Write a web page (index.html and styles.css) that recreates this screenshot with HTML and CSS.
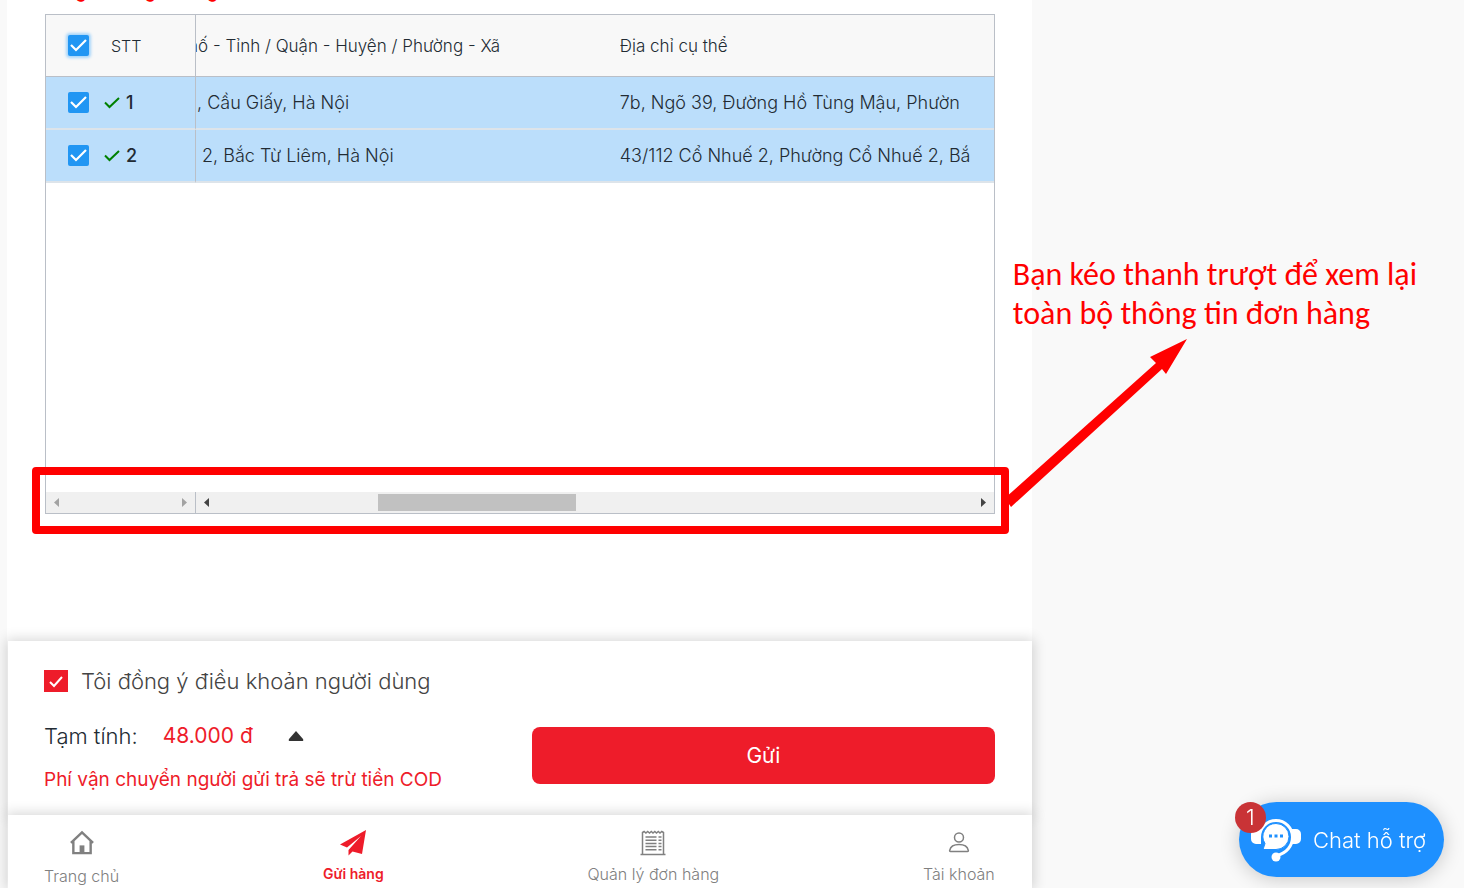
FILE: index.html
```html
<!DOCTYPE html>
<html lang="vi">
<head>
<meta charset="utf-8">
<title>Gửi hàng</title>
<link rel="stylesheet" href="styles.css">
</head>
<body>
<div class="app">
  <main class="content">
    <div class="heading"><h2>Tổng số hàng thường</h2></div>
    <section class="grid">
      <table class="orders">
        <thead>
          <tr>
            <th class="col-pinned"><div class="pinned"><input class="tick focused" type="checkbox" aria-label="Chọn tất cả" checked><span class="stt">STT</span></div></th>
            <th class="col-area"><div class="clip-start"><span>hố - Tỉnh / Quận - Huyện / Phường - Xã</span></div></th>
            <th class="col-address">Địa chỉ cụ thể</th>
          </tr>
        </thead>
        <tbody>
          <tr>
            <td class="col-pinned"><div class="pinned"><input class="tick" type="checkbox" aria-label="Chọn đơn 1" checked><svg class="valid" viewBox="0 0 16 12"><path d="M1 5.500l4.500 4.500L15 1"/></svg><span class="number">1</span></div></td>
            <td class="col-area">, Cầu Giấy, Hà Nội</td>
            <td class="col-address">7b, Ngõ 39, Đường Hồ Tùng Mậu, Phườn</td>
          </tr>
          <tr>
            <td class="col-pinned"><div class="pinned"><input class="tick" type="checkbox" aria-label="Chọn đơn 2" checked><svg class="valid" viewBox="0 0 16 12"><path d="M1 5.500l4.500 4.500L15 1"/></svg><span class="number">2</span></div></td>
            <td class="col-area"> 2, Bắc Từ Liêm, Hà Nội</td>
            <td class="col-address">43/112 Cổ Nhuế 2, Phường Cổ Nhuế 2, Bắ</td>
          </tr>
        </tbody>
      </table>
      <div class="scrollbars">
        <div class="bar bar-pinned">
          <button class="arrow" aria-label="Cuộn trái" disabled><svg viewBox="0 0 5 9"><path d="M5 0v9L0 4.500z"/></svg></button>
          <button class="arrow" aria-label="Cuộn phải" disabled><svg viewBox="0 0 5 9"><path d="M0 0v9l5-4.500z"/></svg></button>
        </div>
        <div class="bar bar-main">
          <button class="arrow" aria-label="Cuộn trái"><svg viewBox="0 0 5 9"><path d="M5 0v9L0 4.500z"/></svg></button>
          <div class="track"><div class="thumb"></div></div>
          <button class="arrow" aria-label="Cuộn phải"><svg viewBox="0 0 5 9"><path d="M0 0v9l5-4.500z"/></svg></button>
        </div>
      </div>
      <div class="marker"></div>
      <div class="note">
        <p>Bạn kéo thanh trượt để xem lại<br>toàn bộ thông tin đơn hàng</p>
        <svg viewBox="0 0 182 168"><path d="M0 159L151 24l-6-6L182 0l-21 35-4-5L6 168z"/></svg>
      </div>
    </section>
  </main>

  <section class="checkout">
    <label class="terms"><input class="terms-box" type="checkbox" checked>Tôi đồng ý điều khoản người dùng</label>
    <div class="summary">
      <div>
        <div class="total"><span>Tạm tính:</span><span class="price">48.000 đ</span><button class="caret" aria-label="Chi tiết"><svg viewBox="0 0 16 10"><path d="M8 0l7 8q1 2-1 2H2q-2 0-1-2z"/></svg></button></div>
        <p class="fee">Phí vận chuyển người gửi trả sẽ trừ tiền COD</p>
      </div>
      <button class="send">Gửi</button>
    </div>
  </section>

  <nav class="tabs">
    <a class="tab tab-home" href="#"><svg viewBox="0 0 26 26"><path class="line" d="M1.500 13.500L13 2.500l11.500 11M4 11.500V24h18V11.500"/><path d="M10.500 16h5v8h-5z"/></svg>Trang chủ</a>
    <a class="tab active" href="#"><svg viewBox="0 0 26 26"><path d="M26 0L0 14.500l7 3L21 6 8.500 20v5.500l4-4L22 24z"/></svg>Gửi hàng</a>
    <a class="tab" href="#"><svg viewBox="0 0 26 26"><path class="thin" d="M2.500 24V2.500l1.600-1 1.800 1.500 1.800-1.500L9.500 3l1.800-1.500L13 3l1.800-1.500L16.500 3l1.800-1.500L20 3l1.800-1.500 1.700 1V24M.5 24.500h25M5.500 7h11M5.500 10.200h11M5.500 13.400h11M5.500 16.600h11M5.500 19.800h11M18.500 7h3M18.500 10.200h3M18.500 13.400h3M18.500 16.600h3M18.500 19.800h3"/></svg>Quản lý đơn hàng</a>
    <a class="tab" href="#"><svg viewBox="0 0 26 26"><circle class="thin" cx="13" cy="7.500" r="4.500"/><path class="thin" d="M4.500 21.500c-.8 0-1-.4-.8-1.200C4.500 16.500 8 14.500 13 14.500s8.500 2 9.300 5.800c.2.800 0 1.200-.8 1.200z"/></svg>Tài khoản</a>
  </nav>
</div>

<button class="chat">
  <svg viewBox="0 0 50 46"><path d="M7 12H5a5 5 0 0 0-5 5v5a5 5 0 0 0 5 5h5V12zM40 12h5a5 5 0 0 1 5 5v5a5 5 0 0 1-5 5h-5z"/><path class="band" d="M8.500 20a16.500 16.500 0 1 1 33 0c0 9-6 16-15.500 18.500"/><path class="bubble" d="M25 6.500a13 13 0 0 1 0 26H12l2-6A13 13 0 0 1 25 6.500z"/><circle cx="25" cy="40" r="4.500"/><path class="dots" d="M18 17.500h3v3h-3zM23.500 17.500h3v3h-3zM29 17.500h3v3h-3z"/></svg>
  <span>Chat hỗ trợ</span>
  <span class="badge">1</span>
</button>
</body>
</html>
```

FILE: styles.css
```css
* { box-sizing: border-box; }
body {
  margin: 0;
  height: 100vh;
  overflow: hidden;
  background: #f9f9f9;
  color: #222b33;
  font: 300 17px/24px Inter, "Noto Sans", sans-serif;
}
h2, p { margin: 0; }
button { padding: 0; border: 0; background: none; font: inherit; color: inherit; }
svg { display: block; fill: currentColor; }

.app {
  display: flex;
  flex-direction: column;
  width: 70%;
  height: 100%;
  margin-left: 7px;
  background: #fff;
}
.content { flex: 1; padding: 0 37px 0 38px; }
.heading {
  display: flex;
  align-items: flex-end;
  height: 14px;
  padding-bottom: 10px;
  color: #f00;
}
.heading h2 { font-size: 17px; font-weight: 600; line-height: 24px; }

.grid {
  position: relative;
  display: flex;
  flex-direction: column;
  justify-content: space-between;
  height: 500px;
  border: 1px solid #babfc7;
}
.orders {
  width: 100%;
  table-layout: fixed;
  border-spacing: 0;
  white-space: pre;
  font-size: 18px;
}
.orders th, .orders td { padding: 0; text-align: left; font-weight: inherit; overflow: hidden; }
.orders th { height: 62px; background: #f8f8f8; border-bottom: 1px solid #babfc7; font-size: 17px; }
.orders td { height: 53px; background: #bbdefb; border-bottom: 2px solid #dde4ea; }
.orders .col-pinned { width: 150px; border-right: 1px solid #babfc7; }
.orders td.col-area { padding-left: 1px; }
.orders th.col-address, .orders td.col-address { width: 374px; }
.clip-start { display: flex; justify-content: flex-end; width: 304px; overflow: hidden; }
.pinned { display: flex; align-items: center; padding-left: 22px; }
.stt { margin-left: 22px; font-size: 16px; }
.number { margin-left: 6px; font-weight: 500; }
.valid { width: 16px; height: 12px; margin-left: 15px; fill: none; stroke: #008000; stroke-width: 2; }

.tick, .terms-box { appearance: none; margin: 0; background: center / 100% no-repeat; }
.tick {
  width: 21px;
  height: 21px;
  border-radius: 2px;
  background-color: #2196f3;
  background-image: url("data:image/svg+xml,%3Csvg xmlns='http://www.w3.org/2000/svg' viewBox='0 0 21 21'%3E%3Cpath d='M3 10l5 5 10-10' fill='none' stroke='white' stroke-width='2.200'/%3E%3C/svg%3E");
}
.focused { box-shadow: 0 0 3px 2px #a6d5fa; }

.scrollbars { display: flex; height: 21px; background: #f0f0f0; }
.bar { display: flex; align-items: center; justify-content: space-between; padding: 0 8px; }
.bar-pinned { width: 150px; border-right: 1px solid #babfc7; }
.bar-main { flex: 1; }
.arrow { color: #444; }
.arrow:disabled { color: #a3a3a3; }
.arrow svg { width: 5px; height: 9px; }
.track { flex: 1; padding: 0 12px; }
.thumb { width: 26.5%; height: 17px; margin-left: 21%; background: #c1c1c1; }

.marker {
  position: absolute;
  inset: 452px -15px -21px -14px;
  border: 8px solid #f00;
  border-radius: 4px;
}
.note { position: absolute; top: 240px; left: 100%; padding-left: 14px; color: #f00; }
.note p { margin-left: 5px; font: 400 32px/39px Carlito, "Noto Sans", sans-serif; white-space: nowrap; }
.note svg { width: 182px; height: 168px; margin-top: 6px; margin-left: -3px; }

.checkout, .tabs { margin-left: 1px; background: #fff; box-shadow: 0 0 12px 2px rgba(0, 0, 0, .16); }
.checkout { height: 174px; padding: 28px 37px 0 36px; font-size: 22px; }
.terms { display: flex; align-items: center; gap: 13px; color: #444; }
.terms-box {
  width: 24px;
  height: 22px;
  background-color: #ee1c2a;
  background-image: url("data:image/svg+xml,%3Csvg xmlns='http://www.w3.org/2000/svg' viewBox='0 0 24 22'%3E%3Cpath d='M6 12l4 4 8-9' fill='none' stroke='white' stroke-width='2'/%3E%3C/svg%3E");
}
.summary { display: grid; grid-template-columns: 1fr 1fr; gap: 25px; margin-top: 31px; }
.total { display: flex; align-items: center; }
.price { margin: 0 35px 0 25px; color: #ee1c2a; font-size: 21px; font-weight: 400; }
.caret svg { width: 16px; height: 10px; color: #333; }
.fee { margin-top: 20px; color: #ee1c2a; font-size: 19px; font-weight: 400; white-space: nowrap; }
.send { height: 57px; margin-top: 3px; border-radius: 8px; background: #ee1c2a; color: #fff; font-size: 21px; font-weight: 400; }

.tabs { display: flex; justify-content: space-between; height: 73px; padding: 15px 37px 0 36px; }
.tab {
  display: flex;
  flex-direction: column;
  align-items: center;
  gap: 6px;
  color: #808080;
  font-size: 16px;
  line-height: 24px;
  text-decoration: none;
}
.tab svg { width: 26px; height: 26px; }
.tab-home { gap: 9px; }
.active { color: #ee1c2a; font-size: 14px; font-weight: 600; }
.line { fill: none; stroke: currentColor; stroke-width: 2.500; }
.thin { fill: none; stroke: currentColor; stroke-width: 1.500; }

.chat {
  position: fixed;
  right: 20px;
  bottom: 11px;
  display: flex;
  align-items: center;
  gap: 12px;
  height: 75px;
  padding: 0 18px 0 12px;
  border-radius: 38px;
  background: #1e90ff;
  box-shadow: 0 2px 20px rgba(0, 0, 0, .2);
  color: #fff;
  font-size: 22px;
}
.chat svg { width: 50px; height: 46px; }
.band { fill: none; stroke: #fff; stroke-width: 3; }
.bubble { stroke: #1e90ff; stroke-width: 1; }
.dots { fill: #1e90ff; }
.badge {
  position: absolute;
  top: 0;
  left: -4px;
  width: 31px;
  height: 31px;
  border-radius: 50%;
  background: #c93336;
  line-height: 31px;
}
```
